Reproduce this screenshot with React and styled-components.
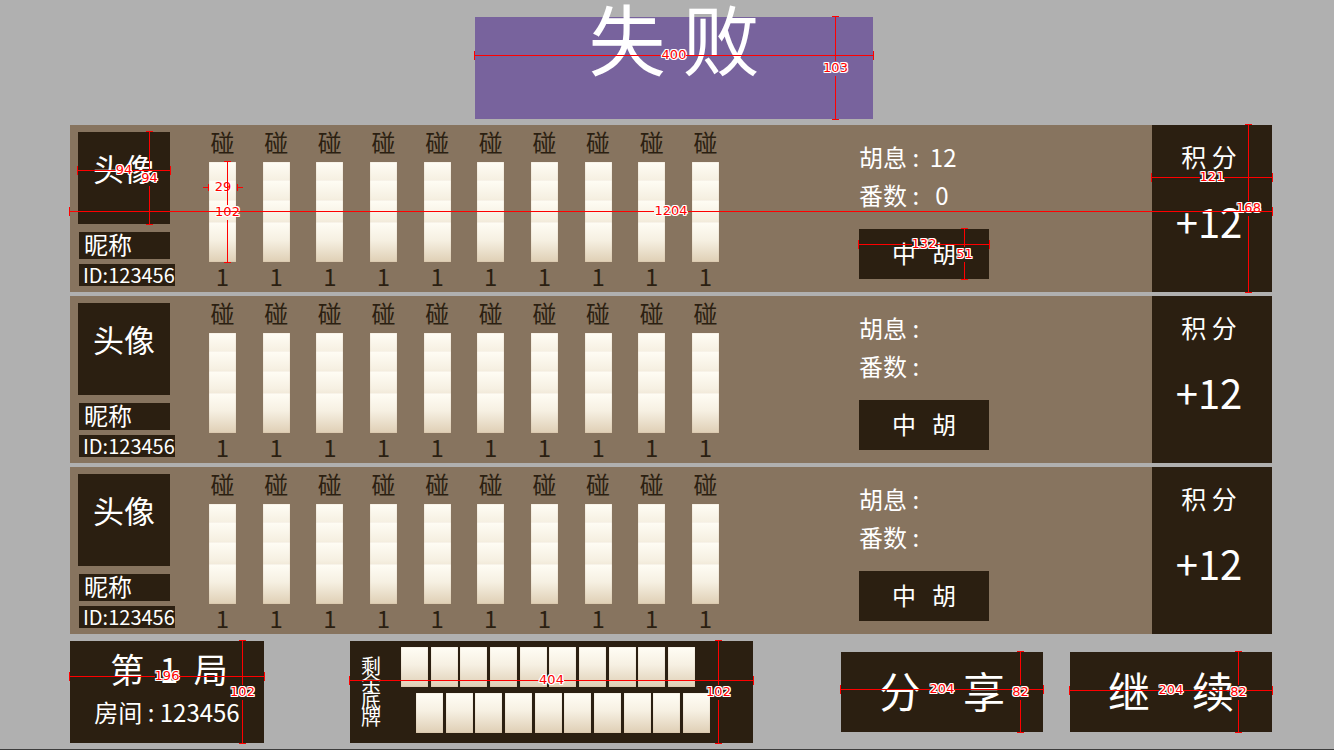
import React from "react";
import styled, { createGlobalStyle, css } from "styled-components";

const color = {
  page: "#b0b0b0",
  purple: "#78639d",
  tan: "#87745f",
  dark: "#2b1f11",
  red: "#ff0000",
};

const Global = createGlobalStyle`
  * { box-sizing: border-box; }
  body {
    margin: 0;
    background: ${color.page};
    color: #fff;
    font-family: "Noto Sans CJK SC", "Noto Sans", sans-serif;
  }
  h1, p { margin: 0; font-weight: 400; }
`;

const Page = styled.main`
  min-height: 100vh;
  padding-top: 17px;
  border-bottom: 1px solid #3c3c3c;
`;

const TitleBar = styled.header`
  display: flex;
  justify-content: center;
  padding-left: 14px;
`;

const TitleBox = styled.div`
  position: relative;
  width: 398px;
  height: 102px;
  background: ${color.purple};
  text-align: center;
`;

const Title = styled.h1`
  font-size: 77px;
  line-height: 40px;
`;

const Content = styled.div`
  padding: 6px 62px 4px 70px;
`;

const Players = styled.section`
  display: flex;
  flex-direction: column;
  gap: 4px;
`;

const PlayerRow = styled.article`
  position: relative;
  display: flex;
  height: 167px;
  background: ${color.tan};
`;

const Profile = styled.div`
  width: 139px;
  padding: 7px 0 0 8px;
`;

const Avatar = styled.div`
  position: relative;
  width: 92px;
  height: 92px;
  background: ${color.dark};
  font-size: 31px;
  line-height: 72px;
  text-align: center;
`;

const Nickname = styled.div`
  width: 91px;
  margin: 8px 0 5px 1px;
  padding: 0 0 4px 5px;
  background: ${color.dark};
  font-size: 24px;
  line-height: 23px;
`;

const PlayerId = styled.div`
  width: 96px;
  margin-left: 1px;
  padding-left: 4px;
  background: ${color.dark};
  font-size: 20px;
  line-height: 22px;
  white-space: nowrap;
`;

const Melds = styled.div`
  display: flex;
  justify-content: space-between;
  width: 510px;
  padding-top: 3px;
  color: ${color.dark};
  font-size: 24px;
  text-align: center;
`;

const Meld = styled.div`
  width: 27px;
  line-height: 28px;
`;

const tileFace = css`
  background: linear-gradient(#fffdf5, #f6f0e2 45%, #dfcfb5);
  box-shadow: inset 0 0 1px #b59a78;
`;

const TileStack = styled.div`
  position: relative;
  margin: 6px 0 0;
`;

const StackedTile = styled.div`
  height: 40px;
  margin-bottom: ${(p) => -p.$overlap}px;
  ${tileFace}
`;

const Info = styled.div`
  margin-left: 140px;
  padding-top: 13px;
  font-size: 24px;
  line-height: 38px;
  white-space: pre;
`;

const HandTag = styled.div`
  position: relative;
  width: 130px;
  height: 50px;
  margin-top: 15px;
  background: ${color.dark};
  line-height: 48px;
  text-align: center;
`;

const Score = styled.div`
  position: relative;
  width: 120px;
  margin-left: auto;
  padding: 12px 6px 0 0;
  background: ${color.dark};
  font-size: 25px;
  line-height: 38px;
  text-align: center;
`;

const ScoreValue = styled.p`
  padding-top: 18px;
  font-size: 40px;
  line-height: 56px;
`;

const Footer = styled.footer`
  display: flex;
  align-items: center;
  padding-top: 7px;
`;

const RoundBox = styled.div`
  position: relative;
  width: 194px;
  height: 102px;
  padding-top: 7px;
  background: ${color.dark};
  font-size: 24px;
  line-height: 44px;
  text-align: center;
  white-space: pre;
`;

const RoundTitle = styled.p`
  padding-left: 4px;
  font-size: 34px;
  line-height: 42px;
`;

const Deck = styled.div`
  position: relative;
  display: flex;
  gap: 20px;
  width: 403px;
  height: 102px;
  margin: 0 auto 0 86px;
  padding: 6px 0 0 11px;
  background: ${color.dark};
`;

const DeckLabel = styled.p`
  width: 20px;
  padding-top: 10px;
  font-size: 20px;
  line-height: 17px;
  word-break: break-all;
`;

const DeckRow = styled.div`
  display: flex;
  justify-content: space-between;
  width: 294px;
  margin: 0 0 6px ${(p) => p.$indent}px;
`;

const Tile = styled.div`
  width: 27px;
  height: 40px;
  ${tileFace}
`;

const Actions = styled.nav`
  display: flex;
  gap: 27px;
`;

const ActionButton = styled.button`
  position: relative;
  width: 202px;
  height: 80px;
  padding: 0 0 4px;
  border: 0;
  background: ${color.dark};
  color: #fff;
  font: inherit;
  font-size: 42px;
  line-height: 76px;
  cursor: pointer;
`;

/* Dimension line with end ticks and its length in the middle */
const MeasureBox = styled.span`
  position: absolute;
  z-index: 1;
  display: flex;
  align-items: center;
  color: ${color.red};
  pointer-events: none;
  ${(p) =>
    p.$vertical
      ? css`
          flex-direction: column;
          top: -1px;
          bottom: -1px;
          right: ${p.$at}px;
          width: 7px;
          border: solid ${color.red};
          border-width: 1px 0;
        `
      : css`
          left: -1px;
          right: -1px;
          top: ${p.$at}px;
          height: 9px;
          border: solid ${color.red};
          border-width: 0 1px;
        `}
`;

const MeasureLine = styled.span`
  flex: 1;
  ${(p) => (p.$vertical ? "width: 1px;" : "height: 1px;")}
  background: ${color.red};
`;

const MeasureLabel = styled.span`
  padding-bottom: 2px;
  font: 13px/13px "DejaVu Sans", sans-serif;
  text-shadow: 1px 0 #fff, -1px 0 #fff, 0 1px #fff, 0 -1px #fff,
    1px 1px #fff, -1px -1px #fff, 1px -1px #fff, -1px 1px #fff;
`;

const OuterTicks = styled.span`
  position: absolute;
  z-index: 1;
  top: 21px;
  left: -6px;
  right: -7px;
  display: flex;
  align-items: center;
  justify-content: space-between;
  height: 9px;
  color: ${color.red};
`;

const OuterTick = styled.span`
  display: flex;
  align-items: center;
  width: 6px;
  height: 7px;
  border: solid ${color.red};
  border-width: ${(p) => (p.$left ? "0 1px 0 0" : "0 0 0 1px")};
`;

function Measure({ value, at, vertical = false }) {
  return (
    <MeasureBox $at={at} $vertical={vertical}>
      <MeasureLine $vertical={vertical} />
      <MeasureLabel>{value}</MeasureLabel>
      <MeasureLine $vertical={vertical} />
    </MeasureBox>
  );
}

function TileWidth({ value }) {
  return (
    <OuterTicks>
      <OuterTick $left>
        <MeasureLine />
      </OuterTick>
      <MeasureLabel>{value}</MeasureLabel>
      <OuterTick>
        <MeasureLine />
      </OuterTick>
    </OuterTicks>
  );
}

const overlaps = [22, 20, 18, 0];
const ten = Array.from({ length: 10 }, (_, i) => i);

const players = [
  { huxi: "  12", fan: "   0", measured: true },
  { huxi: "", fan: "" },
  { huxi: "", fan: "" },
];

function Player({ huxi, fan, measured }) {
  return (
    <PlayerRow>
      <Profile>
        <Avatar>
          头像
          {measured && <Measure value="94" at={34} />}
          {measured && <Measure value="94" at={17} vertical />}
        </Avatar>
        <Nickname>昵称</Nickname>
        <PlayerId>ID:123456</PlayerId>
      </Profile>
      <Melds>
        {ten.map((i) => (
          <Meld key={i}>
            碰
            <TileStack>
              {overlaps.map((o) => (
                <StackedTile key={o} $overlap={o} />
              ))}
              {measured && i === 0 && <TileWidth value="29" />}
              {measured && i === 0 && <Measure value="102" at={5} vertical />}
            </TileStack>
            1
          </Meld>
        ))}
      </Melds>
      <Info>
        <p>胡息 :{huxi}</p>
        <p>番数 :{fan}</p>
        <HandTag>
          中{"   "}胡
          {measured && <Measure value="132" at={11} />}
          {measured && <Measure value="51" at={21} vertical />}
        </HandTag>
      </Info>
      <Score>
        <p>积 分</p>
        <ScoreValue>+12</ScoreValue>
        {measured && <Measure value="121" at={48} />}
        {measured && <Measure value="168" at={20} vertical />}
      </Score>
      {measured && <Measure value="1204" at={82} />}
    </PlayerRow>
  );
}

export default function App() {
  return (
    <>
      <Global />
      <Page>
        <TitleBar>
          <TitleBox>
            <Title>失 败</Title>
            <Measure value="400" at={34} />
            <Measure value="103" at={34} vertical />
          </TitleBox>
        </TitleBar>
        <Content>
          <Players>
            {players.map((p, i) => (
              <Player key={i} {...p} />
            ))}
          </Players>
          <Footer>
            <RoundBox>
              <RoundTitle>第{"  "}1{"  "}局</RoundTitle>
              <p>房间 : 123456</p>
              <Measure value="196" at={31} />
              <Measure value="102" at={18} vertical />
            </RoundBox>
            <Deck>
              <DeckLabel>剩余底牌</DeckLabel>
              <div>
                {[0, 15].map((indent) => (
                  <DeckRow key={indent} $indent={indent}>
                    {ten.map((i) => (
                      <Tile key={i} />
                    ))}
                  </DeckRow>
                ))}
              </div>
              <Measure value="404" at={35} />
              <Measure value="102" at={31} vertical />
            </Deck>
            <Actions>
              <ActionButton type="button">
                分　享
                <Measure value="204" at={33} />
                <Measure value="82" at={19} vertical />
              </ActionButton>
              <ActionButton type="button">
                继　续
                <Measure value="204" at={34} />
                <Measure value="82" at={30} vertical />
              </ActionButton>
            </Actions>
          </Footer>
        </Content>
      </Page>
    </>
  );
}
